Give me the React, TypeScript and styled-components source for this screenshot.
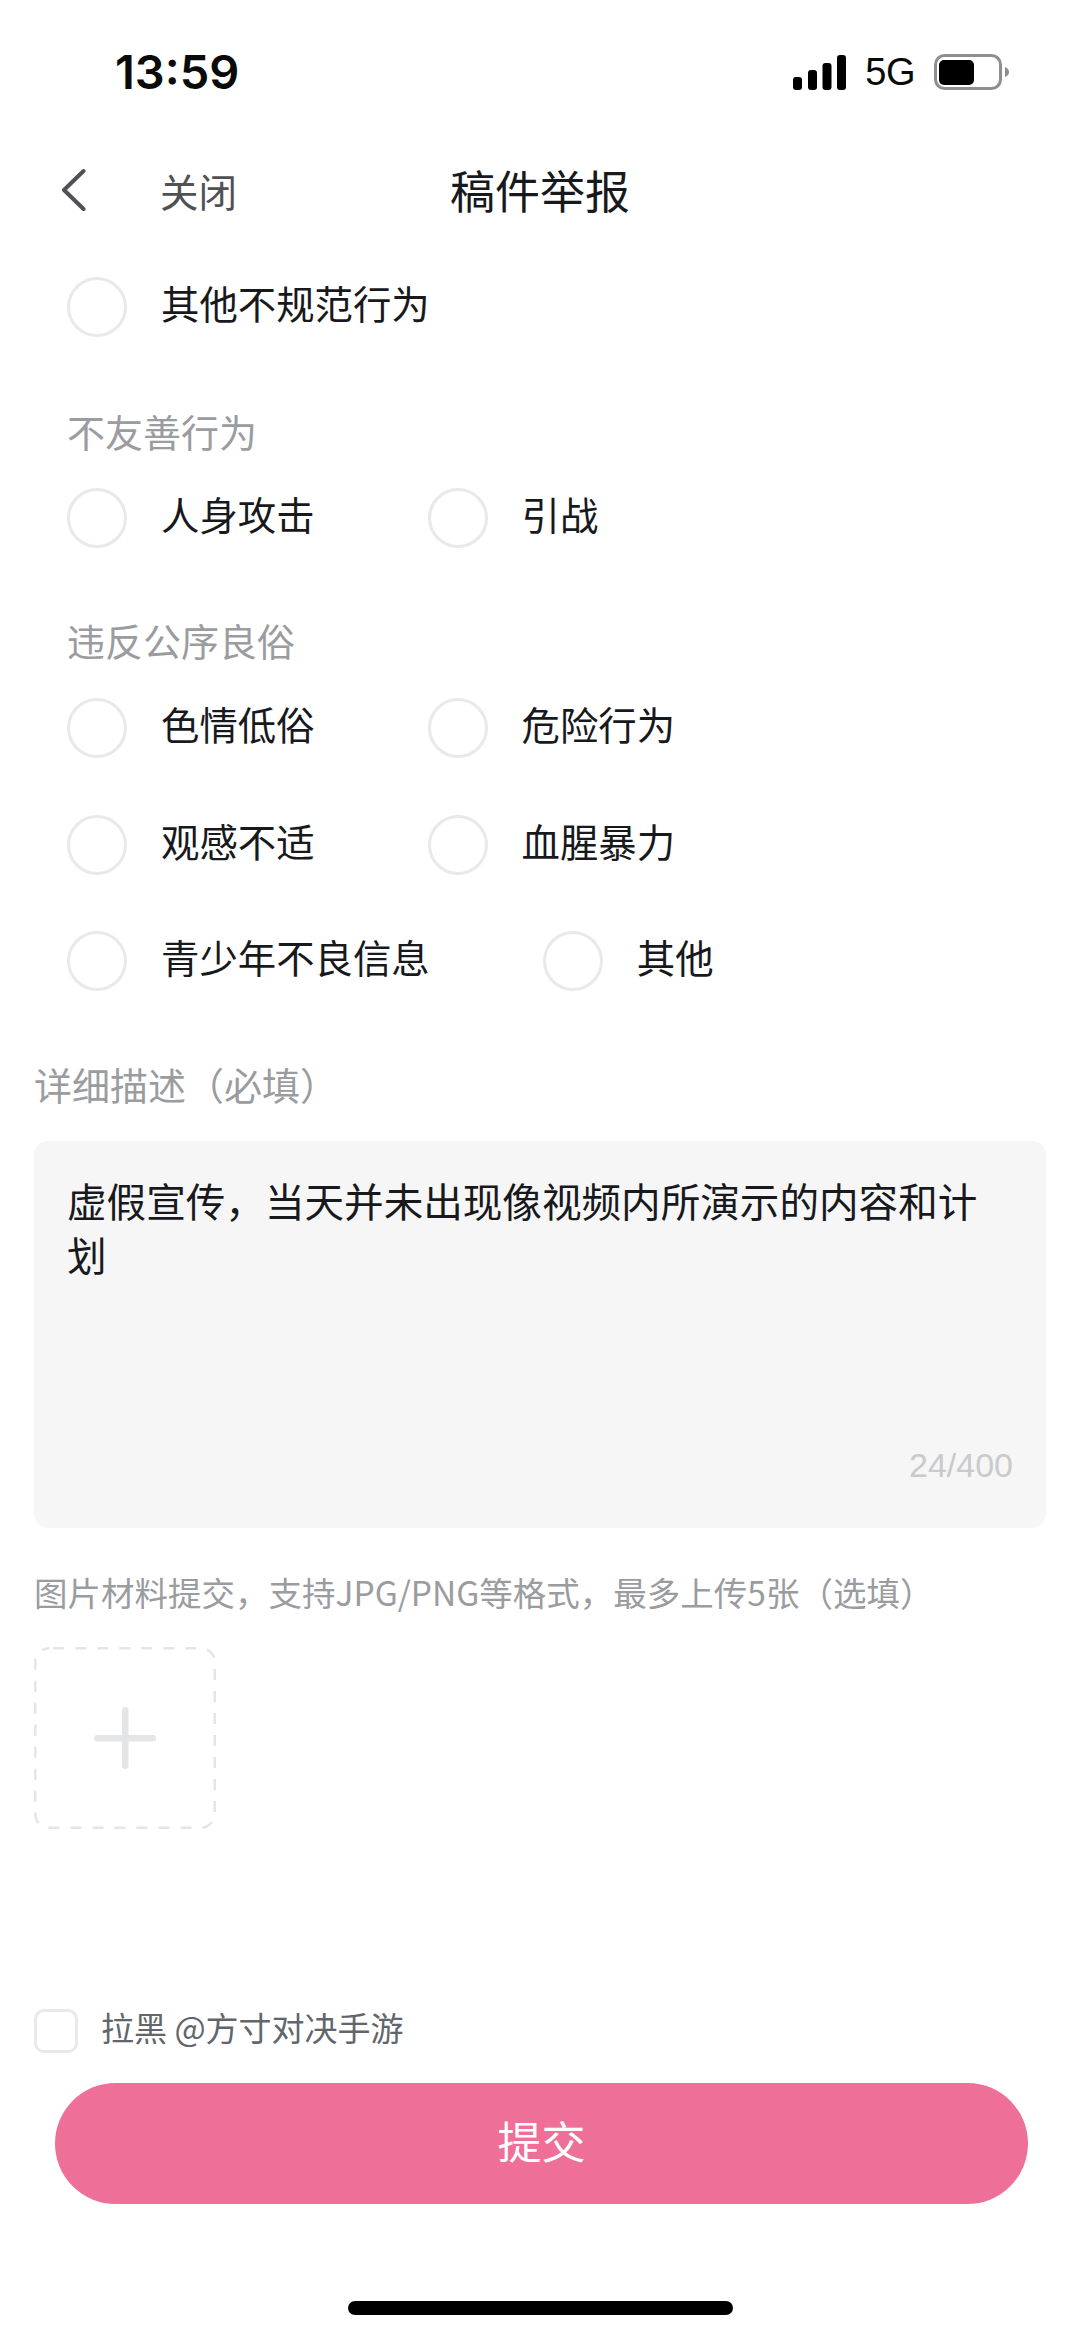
import React from "react";
import styled, { createGlobalStyle } from "styled-components";

const Global = createGlobalStyle`
  html, body { margin: 0; padding: 0; background: #fff; }
  body { font-family: "Noto Sans CJK SC", "Liberation Sans", sans-serif; }
`;

const Page = styled.div`
  width: 1080px;
  height: 2337px;
  background: #fff;
  display: flex;
  flex-direction: column;
  overflow: hidden;
`;

const StatusBar = styled.div`
  height: 144px;
  box-sizing: border-box;
  padding: 46px 71px 0 115px;
  display: flex;
  justify-content: space-between;
  align-items: flex-start;
`;

const Time = styled.div`
  font-family: "Inter", "Liberation Sans", sans-serif;
  font-weight: 600;
  font-size: 47px;
  line-height: 52px;
  color: #0a0a0a;
`;

const StatusIcons = styled.div`
  display: flex;
  align-items: center;
  gap: 19px;
  height: 52px;
`;

const Network = styled.span`
  font-family: "Liberation Sans", sans-serif;
  font-size: 38px;
  letter-spacing: -0.5px;
  color: #0a0a0a;
  line-height: 52px;
`;

const NavBar = styled.div`
  height: 92px;
  position: relative;
  display: flex;
  align-items: center;
  padding-left: 60px;
`;

const CloseText = styled.span`
  font-size: 38.5px;
  color: #505155;
  margin-left: 74px;
`;

const NavTitle = styled.h1`
  position: absolute;
  left: 450px;
  top: 0;
  margin: 0;
  line-height: 92px;
  font-size: 45px;
  font-weight: 400;
  color: #18191c;
`;

const Options = styled.div`
  padding: 0 67px;
  display: flex;
  flex-direction: column;
`;

const Row = styled.div<{ $top: number }>`
  display: flex;
  gap: 113px;
  height: 60px;
  margin-top: ${(p) => p.$top}px;
`;

const Option = styled.label`
  display: flex;
  align-items: center;
  gap: 34px;
`;

const Radio = styled.span`
  width: 60px;
  height: 60px;
  box-sizing: border-box;
  border: 3px solid #e8e9ea;
  border-radius: 50%;
  flex: none;
`;

const OptionText = styled.span`
  font-size: 38.4px;
  color: #18191c;
  line-height: 49px;
  margin-bottom: 9px;
`;

const GroupTitle = styled.div<{ $top: number }>`
  font-size: 38px;
  line-height: 50px;
  color: #9a9ca0;
  margin-top: ${(p) => p.$top}px;
`;

const Form = styled.div`
  padding: 0 34px;
  display: flex;
  flex-direction: column;
`;

const FieldLabel = styled.div`
  font-size: 38px;
  line-height: 50px;
  color: #9a9ca0;
  margin-top: 68px;
`;

const TextBox = styled.div`
  margin-top: 32px;
  height: 387px;
  box-sizing: border-box;
  padding: 32px 33px 0;
  background: #f6f6f6;
  border-radius: 14px;
  position: relative;
  font-size: 39.6px;
  line-height: 54px;
  color: #18191c;
`;

const Counter = styled.span`
  position: absolute;
  right: 33px;
  bottom: 43px;
  font-family: "Liberation Sans", sans-serif;
  font-size: 34px;
  line-height: 40px;
  color: #c9cacc;
`;

const Hint = styled.div`
  margin-top: 42px;
  font-size: 33.5px;
  line-height: 44px;
  color: #9a9ca0;
`;

const Upload = styled.div`
  margin-top: 33px;
  width: 182px;
  height: 182px;
  position: relative;
  display: flex;
  align-items: center;
  justify-content: center;
`;

const DashFrame = styled.svg`
  position: absolute;
  inset: 0;
`;

const Block = styled.div`
  margin-top: 180px;
  display: flex;
  align-items: center;
  gap: 23px;
  height: 44px;
`;

const CheckBox = styled.span`
  width: 44px;
  height: 44px;
  box-sizing: border-box;
  border: 3px solid #e8e9ea;
  border-radius: 10px;
  flex: none;
`;

const BlockText = styled.span`
  font-size: 33px;
  line-height: 36px;
  color: #61666d;
  margin-bottom: 8px;
`;

const Submit = styled.button`
  margin: 30px 18px 0 21px;
  height: 121px;
  border: 0;
  border-radius: 61px;
  background: #ee7099;
  color: #fff;
  font-family: inherit;
  font-size: 44px;
  padding: 0 0 7px;
`;

const HomeBar = styled.div`
  width: 385px;
  height: 14px;
  border-radius: 7px;
  background: #000;
  margin: 97px auto 0;
`;

const Chevron = () => (
  <svg width="26" height="46" viewBox="0 0 26 46" fill="none">
    <path d="M23.5 4 L4 23 L23.5 42" stroke="#505155" strokeWidth="4" strokeLinecap="round" strokeLinejoin="round" />
  </svg>
);

const Signal = () => (
  <svg width="53" height="35" viewBox="0 0 53 35">
    <rect x="0" y="22" width="9" height="13" rx="3" fill="#000" />
    <rect x="15" y="15" width="9" height="20" rx="3" fill="#000" />
    <rect x="29.5" y="8" width="9" height="27" rx="3" fill="#000" />
    <rect x="44" y="0" width="9" height="35" rx="3" fill="#000" />
  </svg>
);

const Battery = () => (
  <svg width="75" height="36" viewBox="0 0 75 36">
    <rect x="1.5" y="1.5" width="65" height="33" rx="9" fill="none" stroke="#8e8e8e" strokeWidth="3" />
    <rect x="5" y="6" width="35" height="25" rx="5" fill="#000" />
    <path d="M71 13 C74 14 75 16 75 18 C75 20 74 22 71 23 Z" fill="#8e8e8e" />
  </svg>
);

const Plus = () => (
  <svg width="62" height="62" viewBox="0 0 62 62">
    <rect x="28" y="0" width="6.5" height="62" rx="3.25" fill="#e3e5e7" />
    <rect x="0" y="28" width="62" height="6.5" rx="3.25" fill="#e3e5e7" />
  </svg>
);

const Item = ({ label }: { label: string }) => (
  <Option>
    <Radio />
    <OptionText>{label}</OptionText>
  </Option>
);

export default function App() {
  return (
    <Page>
      <Global />
      <StatusBar>
        <Time>13:59</Time>
        <StatusIcons>
          <Signal />
          <Network>5G</Network>
          <Battery />
        </StatusIcons>
      </StatusBar>
      <NavBar>
        <Chevron />
        <CloseText>关闭</CloseText>
        <NavTitle>稿件举报</NavTitle>
      </NavBar>
      <Options>
        <Row $top={41}>
          <Item label="其他不规范行为" />
        </Row>
        <GroupTitle $top={69}>不友善行为</GroupTitle>
        <Row $top={32}>
          <Item label="人身攻击" />
          <Item label="引战" />
        </Row>
        <GroupTitle $top={67}>违反公序良俗</GroupTitle>
        <Row $top={33}>
          <Item label="色情低俗" />
          <Item label="危险行为" />
        </Row>
        <Row $top={56.5}>
          <Item label="观感不适" />
          <Item label="血腥暴力" />
        </Row>
        <Row $top={56.5}>
          <Item label="青少年不良信息" />
          <Item label="其他" />
        </Row>
      </Options>
      <Form>
        <FieldLabel>详细描述（必填）</FieldLabel>
        <TextBox>
          虚假宣传，当天并未出现像视频内所演示的内容和计划
          <Counter>24/400</Counter>
        </TextBox>
        <Hint>图片材料提交，支持JPG/PNG等格式，最多上传5张（选填）</Hint>
        <Upload>
          <DashFrame width="182" height="182" viewBox="0 0 182 182" fill="none">
            <rect x="1.25" y="1.25" width="179.5" height="179.5" rx="14" stroke="#e3e5e7" strokeWidth="2.5" strokeDasharray="11 11" strokeDashoffset="-4" />
          </DashFrame>
          <Plus />
        </Upload>
        <Block>
          <CheckBox />
          <BlockText>拉黑 @方寸对决手游</BlockText>
        </Block>
        <Submit>提交</Submit>
      </Form>
      <HomeBar />
    </Page>
  );
}
